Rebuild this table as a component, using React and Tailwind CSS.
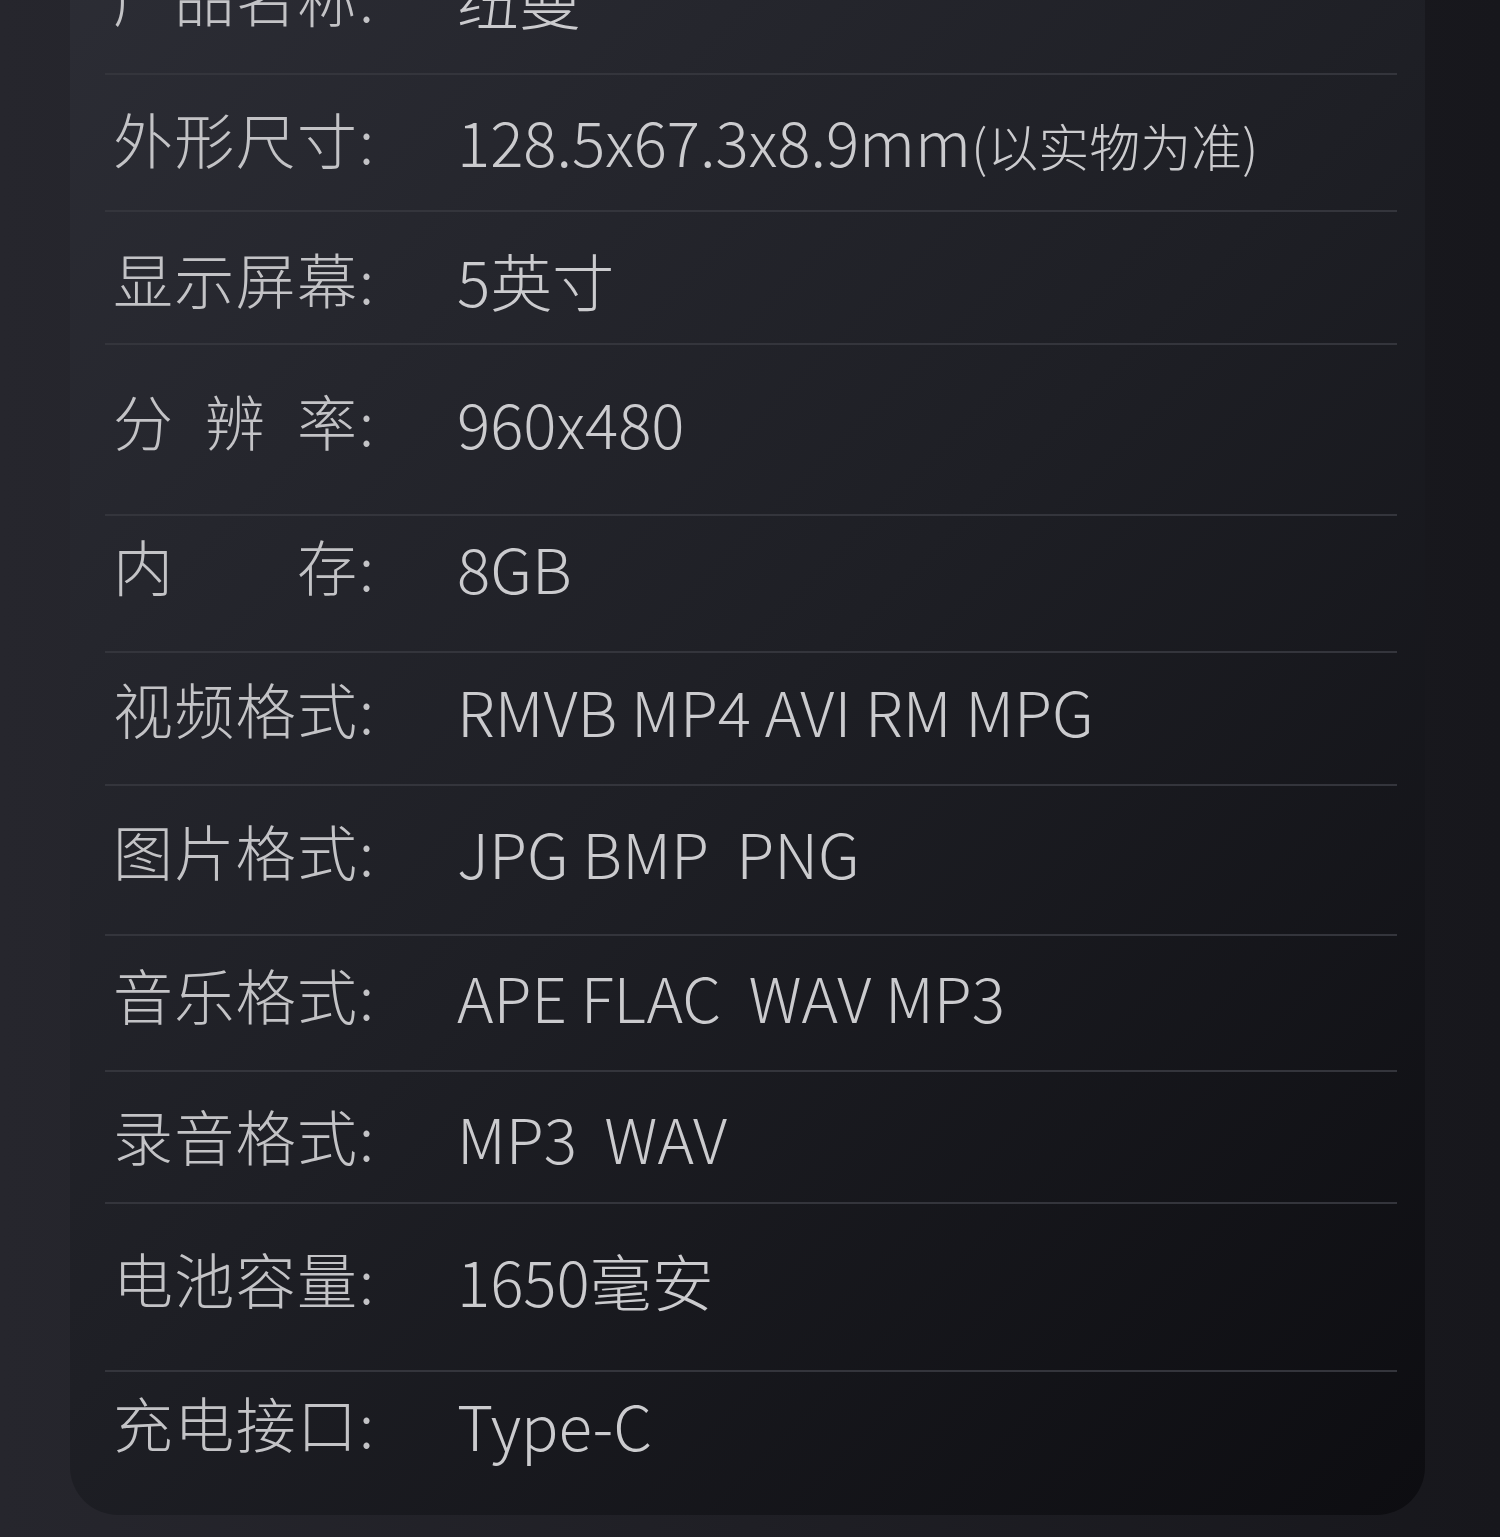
import React from "react";

// spec rows: label chars are spread over a fixed width, like text-align-last: justify
const rows = [
  { label: "产品名称", value: "纽曼", h: 143, pt: 36 },
  { label: "外形尺寸", value: "128.5x67.3x8.9mm", note: "(以实物为准)", h: 137, pt: 33 },
  { label: "显示屏幕", value: "5英寸", h: 133, pt: 36 },
  { label: "分辨率", value: "960x480", h: 171, pt: 45 },
  { label: "内存", value: "8GB", h: 137, pt: 19 },
  { label: "视频格式", value: "RMVB MP4 AVI RM MPG", h: 133, pt: 25 },
  { label: "图片格式", value: "JPG BMP  PNG", h: 150, pt: 34 },
  { label: "音乐格式", value: "APE FLAC  WAV MP3", h: 136, pt: 28 },
  { label: "录音格式", value: "MP3  WAV", h: 132, pt: 33 },
  { label: "电池容量", value: "1650毫安", h: 168, pt: 44 },
  { label: "充电接口", value: "Type-C", h: 145, pt: 20 },
];

const font = { fontFamily: '"Noto Sans CJK SC", "Noto Sans", sans-serif' };

function SpecRow({ row, first }) {
  return (
    <div
      className={`flex items-start pl-2 ${first ? "" : "border-t-2 border-[#34353c]"}`}
      style={{ height: row.h, paddingTop: row.pt }}
    >
      <div className="flex w-[344px] shrink-0 items-start text-[60px] font-light leading-none text-[#c3c3c6]">
        <div className="flex w-[244px] justify-between">
          {row.label.split("").map((c, i) => (
            <span key={i}>{c}</span>
          ))}
        </div>
        <span className="pl-[2px]">:</span>
      </div>
      <div className="whitespace-pre pt-[1px] text-[62px] font-light leading-none text-[#cbcbce]">
        {row.value}
        {row.note && <span className="text-[51px]">{row.note}</span>}
      </div>
    </div>
  );
}

export default function App() {
  return (
    <div
      className="min-h-[1537px] w-full overflow-hidden bg-[linear-gradient(90deg,#26262d_0%,#1f1f25_50%,#17171c_100%)] pb-[22px]"
      style={font}
    >
      <div className="ml-[70px] mt-[-70px] w-[1355px] rounded-b-[48px] bg-[linear-gradient(135deg,#2c2d35_0%,#1e1f25_50%,#0d0d11_100%)] pl-[35px] pr-[28px]">
        {rows.map((row, i) => (
          <SpecRow key={i} row={row} first={i === 0} />
        ))}
      </div>
    </div>
  );
}
